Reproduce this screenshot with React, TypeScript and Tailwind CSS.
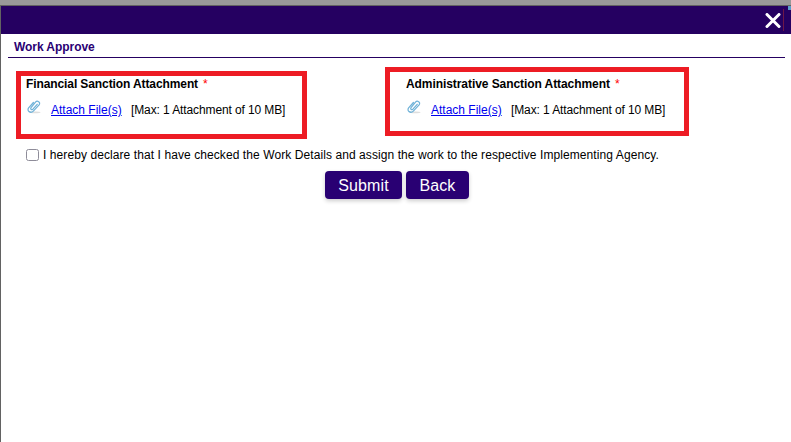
import React from "react";

function Paperclip() {
  return (
    <svg className="h-[16px] w-[16px] shrink-0" viewBox="0 0 16 16" fill="none">
      <ellipse cx="9" cy="13.4" rx="5.5" ry="0.8" fill="#dedede" />
      <path
        d="M5 8.7 9.5 3.1C11.2 1 15 3.1 13.1 5.8L7.3 12.1C4.6 14.7.5 12 2.6 8.9L7.4 3.5M5 8.7C4.1 10.1 5.6 11.4 6.9 10.2L11.2 5.3"
        stroke="#6fb2d8"
        strokeWidth="1.25"
        strokeLinecap="round"
        strokeLinejoin="round"
      />
    </svg>
  );
}

interface AttachmentProps {
  title: string;
  frame: string;
  tracking: string;
}

function Attachment({ title, frame, tracking }: AttachmentProps) {
  return (
    <section className={`border-[5px] border-[#ed1c24] ${frame}`}>
      <h2 className="flex h-[14px] items-center whitespace-nowrap text-[12px] leading-[14px] font-bold">
        <span className={tracking}>{title}</span>
        <span className="ml-[5px] font-normal text-[#ff0000]">*</span>
      </h2>
      <div className="mt-[8px] flex h-[20px] items-start whitespace-nowrap text-[12px] leading-[14px]">
        <Paperclip />
        <a href="#" className="mt-[4px] ml-[9px] w-[71px] text-[#0000ee] underline">
          Attach File(s)
        </a>
        <span className="mt-[4px] ml-[9px] tracking-[-0.11px]">[Max: 1 Attachment of 10 MB]</span>
      </div>
    </section>
  );
}

export default function App() {
  return (
    <div className="flex h-[442px] w-[791px] flex-col overflow-hidden bg-white font-['Liberation_Sans',Arial,sans-serif] text-black">
      <div className="h-[6px] shrink-0 border-b border-[#626262] bg-[#999999]" />
      <div className="flex flex-1 flex-col border-l border-[#626262]">
        <header className="flex h-[28px] items-start justify-end bg-[#250061]">
          <button aria-label="Close" className="mt-[7px]">
            <svg className="h-[15px] w-[16px]" viewBox="0 0 16 15" fill="none">
              <path d="M2 1.5 14 13.5M14 1.5 2 13.5" stroke="white" strokeWidth="3" strokeLinecap="round" />
            </svg>
          </button>
          <span className="mt-[3px] ml-[2px] h-[22px] w-px bg-[#6d1648]" />
          <span className="ml-[4px] h-[4px] w-[3px] bg-[#5b9cca]" />
        </header>
        <div className="mr-[6px] ml-[7px] flex h-[24px] items-start border-b border-[#250061] pt-[6px] pl-[6px]">
          <h1 className="text-[12px] leading-[14px] font-bold tracking-[-0.06px] text-[#290073]">Work Approve</h1>
        </div>
        <div className="flex h-[81px] items-start pt-[9px] pl-[15px]">
          <Attachment
            title="Financial Sanction Attachment"
            tracking="tracking-[-0.1px]"
            frame="mt-[4px] h-[68px] w-[291px] pt-px pl-[5px]"
          />
          <Attachment
            title="Administrative Sanction Attachment"
            tracking="tracking-[-0.07px]"
            frame="ml-[78px] h-[69px] w-[304px] pt-[5px] pl-[16px]"
          />
        </div>
        <label className="mt-[9px] flex h-[14px] items-center pl-[25px] text-[12px] leading-[14px] whitespace-nowrap">
          <input
            type="checkbox"
            className="m-0 h-[12px] w-[13px] appearance-none rounded-[2.5px] border border-[#8e8c99] bg-white checked:bg-[#290073]"
          />
          <span className="ml-[4px] tracking-[0.083px]">
            I hereby declare that I have checked the Work Details and assign the work to the respective Implementing Agency.
          </span>
        </label>
        <div className="mt-[9px] flex gap-[4px] pl-[324px] text-[16px] leading-[18px] text-white">
          <button className="h-[28px] w-[77px] rounded-[4px] bg-[#290073] pt-px tracking-[0.1px] shadow-[0_2px_4px_rgba(0,0,0,0.2)]">Submit</button>
          <button className="h-[28px] w-[63px] rounded-[4px] bg-[#290073] pt-px tracking-[0.1px] shadow-[0_2px_4px_rgba(0,0,0,0.2)]">Back</button>
        </div>
      </div>
    </div>
  );
}
